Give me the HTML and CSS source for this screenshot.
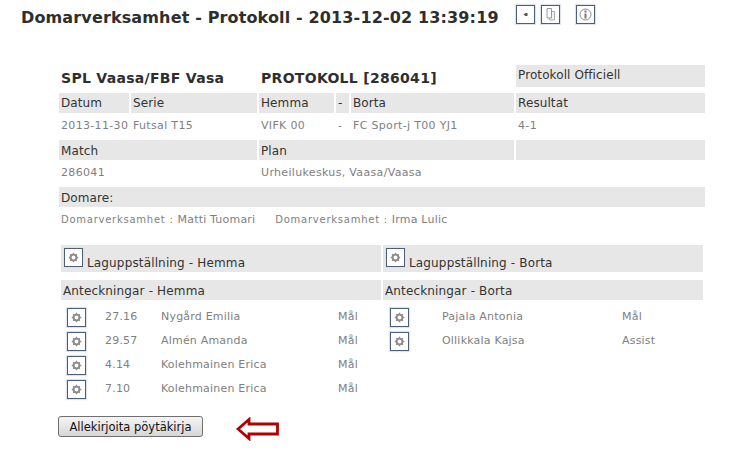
FILE: index.html
```html
<!DOCTYPE html>
<html lang="sv">
<head>
<meta charset="utf-8">
<title>Protokoll</title>
<link rel="stylesheet" href="styles.css">
</head>
<body>
<svg class="defs" width="0" height="0" aria-hidden="true">
  <symbol id="gear" viewBox="0 0 17 17">
    <circle cx="8.500" cy="8.500" r="2.900" fill="none" stroke="#8c8c8c" stroke-width="1.900"/>
    <path d="M8.500 3.800v1.600M8.500 11.600v1.600M3.800 8.500h1.600M11.600 8.500h1.600M5.200 5.200l1.100 1.100M10.700 10.700l1.100 1.100M5.200 11.800l1.100-1.100M10.700 6.300l1.100-1.100" fill="none" stroke="#8c8c8c" stroke-width="1.400"/>
  </symbol>
</svg>
<header class="title-bar">
  <h1 class="title">Domarverksamhet - Protokoll - 2013-12-02 13:39:19</h1>
  <div class="tools">
    <span class="icon-btn"><svg width="17" height="17" viewBox="0 0 17 17"><path d="M6.500 8.500 8.500 7h2v3h-2z" fill="#555"/></svg></span>
    <span class="icon-btn"><svg width="17" height="17" viewBox="0 0 17 17"><path d="M9.500 5.500h3V14H7.500v-2" fill="#f4f4f4" stroke="#aaa"/><path d="M5 2.500h4.500v9.500H5z" fill="#fff" stroke="#999"/></svg></span>
    <span class="icon-btn icon-gap"><svg width="17" height="17" viewBox="0 0 17 17"><circle cx="8.500" cy="8.500" r="5.500" fill="none" stroke="#888"/><path d="M7.500 7.500h2V12.500h-2zM7.500 4.500h2v2h-2z" fill="#777"/></svg></span>
  </div>
</header>

<main class="sheet">
  <section class="grid">
    <div class="org c2">SPL Vaasa/FBF Vasa</div>
    <div class="org c3">PROTOKOLL [286041]</div>
    <div class="head official">Protokoll Officiell</div>

    <div class="head low">Datum</div>
    <div class="head low">Serie</div>
    <div class="head low">Hemma</div>
    <div class="head low">-</div>
    <div class="head low">Borta</div>
    <div class="head low">Resultat</div>

    <div class="data">2013-11-30</div>
    <div class="data">Futsal T15</div>
    <div class="data">VIFK 00</div>
    <div class="data">-</div>
    <div class="data">FC Sport-j T00 YJ1</div>
    <div class="data">4-1</div>

    <div class="head c2 mid">Match</div>
    <div class="head c3 mid">Plan</div>
    <div class="head"></div>

    <div class="data c2">286041</div>
    <div class="data c4">Urheilukeskus, Vaasa/Vaasa</div>

    <div class="head all mid">Domare:</div>
    <div class="data all refs">
      <span class="ref"><small>Domarverksamhet : </small>Matti Tuomari</span>
      <span class="ref"><small>Domarverksamhet : </small>Irma Lulic</span>
    </div>
  </section>

  <section class="teams">
    <div class="team">
      <div class="team-head"><span class="icon-btn"><svg width="17" height="17"><use href="#gear"/></svg></span><span class="team-label">Laguppställning - Hemma</span></div>
      <div class="notes-head">Anteckningar - Hemma</div>
      <div class="events">
        <div class="event home"><span class="icon-btn"><svg width="17" height="17"><use href="#gear"/></svg></span><span class="time">27.16</span><span class="name">Nygård Emilia</span><span>Mål</span></div>
        <div class="event home"><span class="icon-btn"><svg width="17" height="17"><use href="#gear"/></svg></span><span class="time">29.57</span><span class="name">Almén Amanda</span><span>Mål</span></div>
        <div class="event home"><span class="icon-btn"><svg width="17" height="17"><use href="#gear"/></svg></span><span class="time">4.14</span><span class="name">Kolehmainen Erica</span><span>Mål</span></div>
        <div class="event home"><span class="icon-btn"><svg width="17" height="17"><use href="#gear"/></svg></span><span class="time">7.10</span><span class="name">Kolehmainen Erica</span><span>Mål</span></div>
      </div>
    </div>
    <div class="team">
      <div class="team-head"><span class="icon-btn"><svg width="17" height="17"><use href="#gear"/></svg></span><span class="team-label">Laguppställning - Borta</span></div>
      <div class="notes-head">Anteckningar - Borta</div>
      <div class="events away-list">
        <div class="event away"><span class="icon-btn"><svg width="17" height="17"><use href="#gear"/></svg></span><span class="name">Pajala Antonia</span><span>Mål</span></div>
        <div class="event away"><span class="icon-btn"><svg width="17" height="17"><use href="#gear"/></svg></span><span class="name">Ollikkala Kajsa</span><span>Assist</span></div>
      </div>
    </div>
  </section>

  <div class="actions">
    <button class="sign" type="button">Allekirjoita pöytäkirja</button>
    <svg class="arrow" width="44" height="24" viewBox="0 0 44 24"><path d="M2 12 13 2.500V7h28.500v10H13v4.500z" fill="#fff" stroke="#b00000" stroke-width="2.800"/></svg>
  </div>
</main>
</body>
</html>
```
FILE: styles.css
```css
* { box-sizing: border-box; }
html, body { margin: 0; padding: 0; background: #fff; }
body {
  width: 748px;
  height: 471px;
  overflow: hidden;
  font-family: "DejaVu Sans", Verdana, sans-serif;
  font-size: 11px;
  color: #333;
}
.defs { position: absolute; }
.title-bar {
  display: flex;
  align-items: flex-start;
  height: 65px;
  padding: 5px 0 0 21px;
}
.title {
  margin: 0;
  font-size: 16px;
  line-height: 26px;
  font-weight: 700;
  letter-spacing: .14px;
  color: #2e2e2e;
  white-space: nowrap;
}
.tools { display: flex; margin-left: 17px; }
.tools .icon-btn { margin-right: 6px; }
.tools .icon-gap { margin-left: 10px; }
.icon-btn {
  display: inline-flex;
  flex: none;
  width: 19px;
  height: 19px;
  border: 1px solid #4d5f78;
  background: #fff;
  box-shadow: 0 0 1px 1px #dfe4ea;
  align-items: center;
  justify-content: center;
}
.icon-btn svg { display: block; }
.sheet { padding-left: 59px; width: 705px; }
.grid {
  display: grid;
  grid-template-columns: 70px 126px 75px 13px 163px 189px;
  grid-template-rows: 22px 26px 27px 20px 27px 20px 26px;
  column-gap: 2px;
  width: 646px;
}
.head {
  background: #e7e7e7;
  padding: 0 2px;
  line-height: 20px;
  font-size: 12px;
  letter-spacing: .1px;
  color: #333;
}
.low { margin-top: 6px; }
.mid { padding-top: 1px; }
.org {
  font-size: 14px;
  font-weight: 700;
  line-height: 22px;
  padding: 2px 2px 0;
  letter-spacing: .3px;
  color: #2e2e2e;
  white-space: nowrap;
}
.c2 { grid-column: span 2; }
.c3 { grid-column: span 3; }
.c4 { grid-column: span 4; }
.all { grid-column: 1 / -1; }
.data {
  padding: 6px 2px 0;
  line-height: 14px;
  letter-spacing: .33px;
  color: #808080;
  white-space: nowrap;
}
.refs { display: flex; gap: 20px; letter-spacing: .2px; }
small { font-size: 10px; letter-spacing: .75px; }
.teams {
  display: grid;
  grid-template-columns: 320px 320px;
  column-gap: 2px;
  margin: 12px 0 0 2px;
}
.team-head {
  display: flex;
  align-items: flex-start;
  height: 27px;
  padding: 3px 0 0 3px;
  background: #e7e7e7;
}
.team-label { font-size: 12px; line-height: 16px; letter-spacing: .15px; margin: 7px 0 0 4px; }
.notes-head {
  margin-top: 8px;
  height: 20px;
  padding: 1px 0 0 2px;
  background: #e7e7e7;
  font-size: 12px;
  letter-spacing: .15px;
  line-height: 20px;
}
.events { display: flex; flex-direction: column; gap: 5px; padding: 8px 0 0 6px; }
.away-list { padding-left: 7px; }
.event {
  display: flex;
  align-items: flex-start;
  height: 19px;
  color: #808080;
  line-height: 18px;
  letter-spacing: .2px;
}
.event .icon-btn { margin-right: 19px; }
.time { width: 56px; color: #808080; }
.home .name { width: 177px; }
.away .icon-btn { margin-right: 33px; }
.away .name { width: 180px; }
.actions { display: flex; align-items: flex-start; margin-top: 17px; }
.sign {
  margin: 0 0 0 -1px;
  width: 145px;
  height: 21px;
  padding: 0;
  border: 1px solid #707070;
  border-radius: 3px;
  background: linear-gradient(#f5f5f5, #e6e6e6 50%, #d6d6d6);
  font-family: "DejaVu Sans", Verdana, sans-serif;
  font-size: 11.500px;
  color: #111;
}
.arrow { margin: 1px 0 0 33px; }
```
